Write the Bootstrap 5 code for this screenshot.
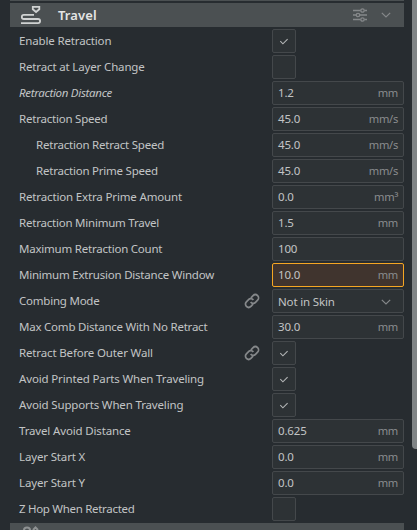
<!DOCTYPE html>
<html lang="en">
<head>
<meta charset="utf-8">
<meta name="viewport" content="width=device-width, initial-scale=1">
<title>Travel settings</title>
<link rel="stylesheet" href="https://cdn.jsdelivr.net/npm/bootstrap@5.3.0/dist/css/bootstrap.min.css">
<style>
body{background:#272c30;color:#c2c4c5;font:11.5px/16px "Noto Sans",sans-serif;height:530px}
.panel{width:394px;margin-left:10px}
.strip{height:1px;background:#4b5052;margin-bottom:2px}
.cat{height:24px;background:#4b5052;margin-bottom:2px}
.cat-icon{margin-left:10px}
.cat-chev{margin:0 13px 0 14px}
.cat-title{font-size:13px;font-weight:600;color:#e4e5e5;margin-left:16px;letter-spacing:.1px}
.setting{height:24px;margin-bottom:2px;padding-left:9px;letter-spacing:-.15px}
.tight{letter-spacing:-.22px}
.tighter{letter-spacing:-.3px}
.sub{padding-left:26px}
.field{width:132px;height:24px;border:1px solid #44484b;border-radius:2px;background:#2d3235;padding:0 5px;letter-spacing:-.15px}
.check{width:24px;padding:0;margin-right:108px}
.warn{background:#40342e;border-color:#f5a623}
.unit{color:#8a8c8f;font-size:11.2px;letter-spacing:-.3px}
.choice{padding-top:2px}
.choice-chev{margin:1px 7px 0 0}
.link{margin-right:12px}
.next{height:7px;background:#4b5052}
.bar{width:5px;height:449px;background:#808486;border-radius:0 0 0 4px}
svg{fill:none;stroke:#85888a;display:block;flex:none}
</style>
<script src="https://cdn.jsdelivr.net/npm/bootstrap@5.3.0/dist/js/bootstrap.bundle.min.js"></script>
</head>
<body class="overflow-hidden d-flex justify-content-between align-items-start">
<svg class="d-none">
<symbol id="tick" viewBox="0 0 22 22"><path d="M7.300 11.200l2.600 2.600 4.700-4.600" stroke="#b4b6b7" stroke-width="1.100"/></symbol>
<symbol id="chev" viewBox="0 0 10 6"><path d="M.8.8L5 5 9.2.8" stroke-width="1.200"/></symbol>
<symbol id="chain" viewBox="0 0 24 24"><path d="M10 13.500a4.600 4.600 0 0 0 7.200.5l3.200-3.200a4.800 4.800 0 0 0-6.800-6.800l-3.200 3.200M14 10.500a4.600 4.600 0 0 0-7.200-.5l-3.200 3.200a4.800 4.800 0 0 0 6.800 6.800l3.200-3.200" stroke-width="2.600"/></symbol>
</svg>
<main class="panel">
<div class="strip"></div>
<div class="cat d-flex align-items-center">
<svg class="cat-icon" width="22" height="20" viewBox="0 0 22 20"><path d="M12.800 1.900h6.500v2.400l-3.250 2.700-3.250-2.700zM14 9.800H3.900a2.100 2.100 0 0 0 0 4.200H18a2.100 2.100 0 0 1 0 4.200H1" stroke="#d0d2d2" stroke-width="1.800"/></svg>
<span class="cat-title">Travel</span>
<svg class="ms-auto" width="14" height="14" viewBox="0 0 14 14"><path d="M0 2.500h7.500M11.500 2.500H14M0 7h3M7 7h7M0 11.500h7.500M11.500 11.500H14" stroke-width="1.500"/><circle cx="9.500" cy="2.500" r="1.700" stroke-width="1.300"/><circle cx="5" cy="7" r="1.700" stroke-width="1.300"/><circle cx="9.500" cy="11.500" r="1.700" stroke-width="1.300"/></svg>
<svg class="cat-chev" width="10" height="6"><use href="#chev"/></svg>
</div>
<div class="setting d-flex align-items-center"><span class="me-auto">Enable Retraction</span><div class="field check"><svg width="22" height="22"><use href="#tick"/></svg></div></div>
<div class="setting d-flex align-items-center"><span class="me-auto">Retract at Layer Change</span><div class="field check"></div></div>
<div class="setting d-flex align-items-center"><span class="me-auto fst-italic tighter">Retraction Distance</span><div class="field d-flex justify-content-between align-items-center"><span>1.2</span><span class="unit">mm</span></div></div>
<div class="setting d-flex align-items-center"><span class="me-auto tight">Retraction Speed</span><div class="field d-flex justify-content-between align-items-center"><span>45.0</span><span class="unit">mm/s</span></div></div>
<div class="setting sub d-flex align-items-center"><span class="me-auto tight">Retraction Retract Speed</span><div class="field d-flex justify-content-between align-items-center"><span>45.0</span><span class="unit">mm/s</span></div></div>
<div class="setting sub d-flex align-items-center"><span class="me-auto tight">Retraction Prime Speed</span><div class="field d-flex justify-content-between align-items-center"><span>45.0</span><span class="unit">mm/s</span></div></div>
<div class="setting d-flex align-items-center"><span class="me-auto">Retraction Extra Prime Amount</span><div class="field d-flex justify-content-between align-items-center"><span>0.0</span><span class="unit">mm³</span></div></div>
<div class="setting d-flex align-items-center"><span class="me-auto tight">Retraction Minimum Travel</span><div class="field d-flex justify-content-between align-items-center"><span>1.5</span><span class="unit">mm</span></div></div>
<div class="setting d-flex align-items-center"><span class="me-auto tight">Maximum Retraction Count</span><div class="field d-flex justify-content-between align-items-center"><span>100</span></div></div>
<div class="setting d-flex align-items-center"><span class="me-auto tight">Minimum Extrusion Distance Window</span><div class="field warn d-flex justify-content-between align-items-center"><span>10.0</span><span class="unit">mm</span></div></div>
<div class="setting d-flex align-items-center"><span class="me-auto tight">Combing Mode</span><svg class="link" width="16" height="16"><use href="#chain"/></svg><div class="field d-flex justify-content-between align-items-center"><span class="choice">Not in Skin</span><svg class="choice-chev" width="10" height="6"><use href="#chev"/></svg></div></div>
<div class="setting d-flex align-items-center"><span class="me-auto tight">Max Comb Distance With No Retract</span><div class="field d-flex justify-content-between align-items-center"><span>30.0</span><span class="unit">mm</span></div></div>
<div class="setting d-flex align-items-center"><span class="me-auto">Retract Before Outer Wall</span><svg class="link" width="16" height="16"><use href="#chain"/></svg><div class="field check"><svg width="22" height="22"><use href="#tick"/></svg></div></div>
<div class="setting d-flex align-items-center"><span class="me-auto">Avoid Printed Parts When Traveling</span><div class="field check"><svg width="22" height="22"><use href="#tick"/></svg></div></div>
<div class="setting d-flex align-items-center"><span class="me-auto">Avoid Supports When Traveling</span><div class="field check"><svg width="22" height="22"><use href="#tick"/></svg></div></div>
<div class="setting d-flex align-items-center"><span class="me-auto">Travel Avoid Distance</span><div class="field d-flex justify-content-between align-items-center"><span>0.625</span><span class="unit">mm</span></div></div>
<div class="setting d-flex align-items-center"><span class="me-auto">Layer Start X</span><div class="field d-flex justify-content-between align-items-center"><span>0.0</span><span class="unit">mm</span></div></div>
<div class="setting d-flex align-items-center"><span class="me-auto">Layer Start Y</span><div class="field d-flex justify-content-between align-items-center"><span>0.0</span><span class="unit">mm</span></div></div>
<div class="setting d-flex align-items-center"><span class="me-auto tighter">Z Hop When Retracted</span><div class="field check"></div></div>
<div class="next"><svg class="cat-icon" width="22" height="7" viewBox="0 0 22 7"><path d="M4 7a3 2.600 0 0 1 6 0M13 7l2.500-2.500L18 7" stroke="#8f9293" stroke-width="2"/></svg></div>
</main>
<div class="bar"></div>
</body>
</html>
